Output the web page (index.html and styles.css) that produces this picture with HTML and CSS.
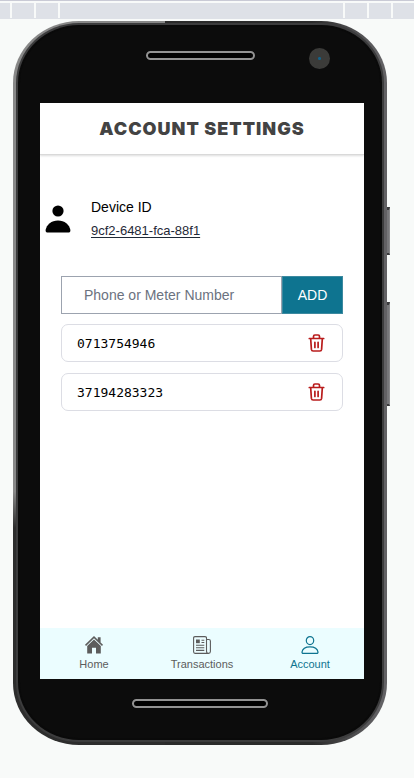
FILE: index.html
```html
<!DOCTYPE html>
<html lang="en">
<head>
<meta charset="utf-8">
<meta name="viewport" content="width=device-width, initial-scale=1">
<title>Account Settings</title>
<link rel="stylesheet" href="styles.css">
</head>
<body>
<div class="ruler">
  <div class="ticks ticks-left"><i></i><i></i><i></i></div>
  <div class="ticks ticks-right"><i></i><i></i><i></i></div>
</div>
<div class="phone">
  <span class="side-key power"></span>
  <span class="side-key volume"></span>
  <div class="bezel">
    <div class="forehead">
      <span class="speaker"></span>
      <span class="camera"></span>
    </div>
    <div class="screen">
      <header class="title-bar"><h1>ACCOUNT SETTINGS</h1></header>
      <main class="content">
        <section class="device">
          <svg class="avatar" viewBox="0 0 26 28" aria-hidden="true"><circle cx="13" cy="6" r="5.6"/><path d="M.6 25C1.5 19.600 6.500 15.400 13 15.400S24.500 19.600 25.400 25Q25.600 27.600 23 27.600H3Q.400 27.600.6 25Z"/></svg>
          <div>
            <p class="device-label">Device ID</p>
            <a class="device-id" href="#device">9cf2-6481-fca-88f1</a>
          </div>
        </section>
        <section class="numbers">
          <form class="add-form">
            <input type="text" aria-label="Phone or Meter Number" placeholder="Phone or Meter Number">
            <button type="button" class="add">ADD</button>
          </form>
          <ul class="list">
            <li><span>0713754946</span>
              <button type="button" class="remove" aria-label="Remove 0713754946"><svg viewBox="0 0 16 18" aria-hidden="true"><path d="M.8 4.500H15.200M5 4V2.400Q5 1 6.400 1H9.600Q11 1 11 2.400V4M2.200 5L2.900 15.400Q3.100 17 4.600 17H11.400Q12.900 17 13.100 15.400L13.800 5M6.400 8.300V13.500M9.600 8.300V13.500"/></svg></button></li>
            <li><span>37194283323</span>
              <button type="button" class="remove" aria-label="Remove 37194283323"><svg viewBox="0 0 16 18" aria-hidden="true"><path d="M.8 4.500H15.200M5 4V2.400Q5 1 6.400 1H9.600Q11 1 11 2.400V4M2.200 5L2.900 15.400Q3.100 17 4.600 17H11.400Q12.900 17 13.100 15.400L13.800 5M6.400 8.300V13.500M9.600 8.300V13.500"/></svg></button></li>
          </ul>
        </section>
      </main>
      <nav class="tabs">
        <a href="#home"><svg viewBox="0 0 18 18" aria-hidden="true"><path fill="currentColor" d="M9 0 12.800 3.700V1.200H15.600V6.400L18 8.800 17 9.900 9 2.200 1 9.900 0 8.800Z"/><path fill="currentColor" d="M9 3.600 15.800 10V17.600H11V11.800H7V17.600H2.200V10Z"/></svg>Home</a>
        <a href="#transactions"><svg viewBox="0 0 18 18" aria-hidden="true"><g fill="none" stroke="currentColor" stroke-width="1.100"><path d="M13.500 15V2Q13.500.6 12 .6H2Q.6.600.6 2V15.800Q.6 17.400 2 17.400H15.500Q13.500 17.400 13.500 15ZM13.500 3.500H15.800Q17.400 3.500 17.400 5V15.500Q17.400 17.400 15.500 17.400"/><path d="M8.500 4.200H11.300M8.500 6.500H11.300M3 9.200H11.300M3 11.800H11.300M3 14.400H11.300"/></g><path fill="currentColor" d="M3 3.500H6.800V7.200H3Z"/></svg>Transactions</a>
        <a href="#account" class="active" aria-current="page"><svg viewBox="0 0 18 18" aria-hidden="true"><g fill="none" stroke="currentColor" stroke-width="1.200"><ellipse cx="9" cy="4.600" rx="3.700" ry="4"/><path d="M1 16C1.500 12.500 5 10.800 9 10.800S16.500 12.500 17 16Q17.100 17.300 15.800 17.300H2.200Q.9 17.300 1 16Z"/></g></svg>Account</a>
      </nav>
    </div>
    <div class="chin"><span class="speaker"></span></div>
  </div>
</div>
</body>
</html>
```
FILE: styles.css
```css
* { box-sizing: border-box; }
body, h1, p, ul { margin: 0; padding: 0; }

body {
  display: flex;
  flex-direction: column;
  min-height: 100vh;
  background: #f8faf9;
  font-family: "Liberation Sans", Arial, sans-serif;
}

.ruler {
  display: flex;
  justify-content: space-between;
  height: 19px;
  background: #dee1e7;
  border-top: 1px solid #c9cad5;
  box-shadow: inset 0 2px #f8faf9;
}
.ticks { display: flex; padding-top: 2px; }
.ticks-left { gap: 22px; padding-left: 10px; }
.ticks-right { gap: 22px; padding-right: 21px; }
.ticks i { width: 2px; height: 15px; background: #f8faf9; }

.phone {
  position: relative;
  display: flex;
  flex: 1;
  margin: 2px 27px 33px 13px;
  padding: 6px 7px 7px;
  border-radius: 66px / 62px;
  background:
    linear-gradient(#888 65%, #2d2d2d 70%) left / 152px 100% no-repeat,
    linear-gradient(to right, #2b2b2b 80%, #626164 98%);
}

.side-key {
  position: absolute;
  left: 100%;
  width: 3px;
  background: #77777a;
  border: solid #3a3a3c;
  border-width: 3px 1px 2px 0;
  border-right-color: #88888a;
}
.power { top: 186px; height: 48px; }
.volume { top: 281px; height: 104px; }

.bezel {
  display: flex;
  flex: 1;
  flex-direction: column;
  min-width: 0;
  padding: 0 16px 0 20px;
  border-radius: 59px / 56px;
  background: #0c0c0c;
  box-shadow: 0 0 0 2px #0a0a0a, 0 0 0 4px #3c3c3d;
}

.forehead {
  display: grid;
  grid-template-columns: 1fr 109px 1fr;
  align-items: start;
  height: 76px;
  margin-right: 3px;
}
.speaker {
  grid-column: 2;
  width: 109px;
  height: 9px;
  margin-top: 24px;
  border: 2px solid #929292;
  border-radius: 5px;
  background: #000;
}
.camera {
  width: 21px;
  height: 21px;
  margin: 21px 0 0 54px;
  border-radius: 50%;
  background: radial-gradient(circle, #12638c 0 1px, #3b3b39 2px);
}

.screen {
  display: flex;
  flex: 1;
  flex-direction: column;
  overflow: hidden;
  background: #fff;
}
.title-bar {
  padding: 15px 0 14px;
  border-bottom: 1px solid #d9d9d9;
  box-shadow: 0 1px 2px #ddd;
  text-align: center;
}
.title-bar h1 {
  color: #434343;
  font: 900 18px/22px Inter, sans-serif;
  letter-spacing: 1px;
}

.content { flex: 1; }
.device {
  display: flex;
  align-items: center;
  gap: 20px;
  margin-top: 40px;
  padding-left: 5px;
}
.avatar { width: 26px; height: 28px; }
.device-label { color: #000; font-size: 14px; line-height: 24px; }
.device-id {
  display: block;
  color: #1f2937;
  font-size: 13px;
  line-height: 24px;
  text-decoration: underline;
  text-underline-offset: 2px;
}

.numbers { margin: 33px 21px 0; }
.add-form { display: flex; height: 38px; }
.add-form input {
  flex: 1;
  min-width: 0;
  padding: 0 22px;
  border: 1px solid #9ca3af;
  border-radius: 0;
  outline: 0;
  background: #fff;
  font: 14px "Liberation Sans", Arial, sans-serif;
}
.add-form input::placeholder { color: #6b7280; }
.add {
  width: 61px;
  padding: 0;
  border: 1px solid #3c899f;
  background: #0e7490;
  color: #fff;
  font: 14px "Liberation Sans", Arial, sans-serif;
}

.list { list-style: none; }
.list li {
  display: flex;
  align-items: center;
  justify-content: space-between;
  height: 38px;
  margin-top: 10px;
  padding: 0 17px 0 15px;
  border: 1px solid #dcdde4;
  border-radius: 7px;
  color: #000;
  font: 13px "DejaVu Sans Mono", monospace;
}
.list li + li { margin-top: 11px; }
.remove {
  display: flex;
  padding: 0;
  border: 0;
  background: none;
  color: #b91c1c;
}
.remove svg {
  width: 17px;
  height: 18px;
  fill: none;
  stroke: currentColor;
  stroke-width: 1.7;
  stroke-linecap: round;
}

.tabs {
  display: grid;
  grid-template-columns: repeat(3, 1fr);
  height: 51px;
  background: #ebfdff;
}
.tabs a {
  display: flex;
  flex-direction: column;
  align-items: center;
  gap: 3px;
  padding-top: 8px;
  color: #5c5c5c;
  font: 11px/14px "Liberation Sans", Arial, sans-serif;
  text-decoration: none;
}
.tabs svg { width: 18px; height: 18px; }
.tabs .active { color: #0e7490; }

.chin {
  display: flex;
  justify-content: center;
  height: 59px;
  margin-right: 4px;
}
.chin .speaker { width: 136px; margin-top: 20px; }
```
